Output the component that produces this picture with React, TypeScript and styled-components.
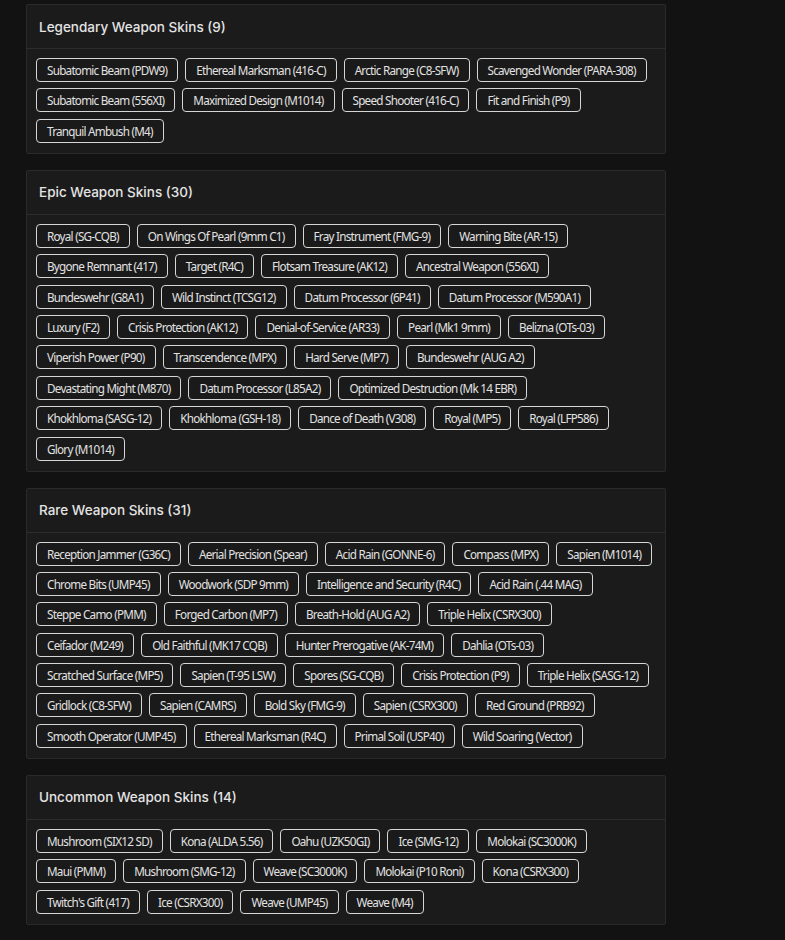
import React from 'react';
import styled, { createGlobalStyle } from 'styled-components';

const GlobalStyle = createGlobalStyle`
  body {
    margin: 0;
    background-color: #121212;
    font-family: "Noto Sans", Inter, sans-serif;
  }
`;

const Page = styled.main`
  display: flex;
  flex-direction: column;
  gap: 16px;
  padding: 4px 0 16px 26px;
`;

const Card = styled.section`
  width: 640px;
  box-sizing: border-box;
  background-color: #1b1b1b;
  border: 1px solid #2a2a2a;
  border-radius: 2px;
`;

const CardHeader = styled.header`
  height: 43px;
  display: flex;
  align-items: center;
  padding: 0 12px;
  border-bottom: 1px solid #2c2c2c;
`;

const Title = styled.h2`
  margin: 0;
  font-family: Inter, "Noto Sans", sans-serif;
  font-size: 13.5px;
  font-weight: 500;
  color: #e4e4e4;
`;

const TagList = styled.div`
  display: flex;
  flex-wrap: wrap;
  gap: 6.4px 7px;
  padding: 9px 9px 10px;
`;

const Tag = styled.span`
  display: inline-flex;
  align-items: center;
  height: 24px;
  box-sizing: border-box;
  padding: 0 10px;
  border: 1px solid #d6d6d6;
  border-radius: 4px;
  background-color: #1a1a1a;
  color: #e2e2e2;
  font-size: 11.7px;
  letter-spacing: -0.75px;
  white-space: nowrap;
`;

type Section = { title: string; skins: string[] };

const sections: Section[] = [
  {
    title: 'Legendary Weapon Skins',
    skins: [
      'Subatomic Beam (PDW9)',
      'Ethereal Marksman (416-C)',
      'Arctic Range (C8-SFW)',
      'Scavenged Wonder (PARA-308)',
      'Subatomic Beam (556XI)',
      'Maximized Design (M1014)',
      'Speed Shooter (416-C)',
      'Fit and Finish (P9)',
      'Tranquil Ambush (M4)',
    ],
  },
  {
    title: 'Epic Weapon Skins',
    skins: [
      'Royal (SG-CQB)',
      'On Wings Of Pearl (9mm C1)',
      'Fray Instrument (FMG-9)',
      'Warning Bite (AR-15)',
      'Bygone Remnant (417)',
      'Target (R4C)',
      'Flotsam Treasure (AK12)',
      'Ancestral Weapon (556XI)',
      'Bundeswehr (G8A1)',
      'Wild Instinct (TCSG12)',
      'Datum Processor (6P41)',
      'Datum Processor (M590A1)',
      'Luxury (F2)',
      'Crisis Protection (AK12)',
      'Denial-of-Service (AR33)',
      'Pearl (Mk1 9mm)',
      'Belizna (OTs-03)',
      'Viperish Power (P90)',
      'Transcendence (MPX)',
      'Hard Serve (MP7)',
      'Bundeswehr (AUG A2)',
      'Devastating Might (M870)',
      'Datum Processor (L85A2)',
      'Optimized Destruction (Mk 14 EBR)',
      'Khokhloma (SASG-12)',
      'Khokhloma (GSH-18)',
      'Dance of Death (V308)',
      'Royal (MP5)',
      'Royal (LFP586)',
      'Glory (M1014)',
    ],
  },
  {
    title: 'Rare Weapon Skins',
    skins: [
      'Reception Jammer (G36C)',
      'Aerial Precision (Spear)',
      'Acid Rain (GONNE-6)',
      'Compass (MPX)',
      'Sapien (M1014)',
      'Chrome Bits (UMP45)',
      'Woodwork (SDP 9mm)',
      'Intelligence and Security (R4C)',
      'Acid Rain (.44 MAG)',
      'Steppe Camo (PMM)',
      'Forged Carbon (MP7)',
      'Breath-Hold (AUG A2)',
      'Triple Helix (CSRX300)',
      'Ceifador (M249)',
      'Old Faithful (MK17 CQB)',
      'Hunter Prerogative (AK-74M)',
      'Dahlia (OTs-03)',
      'Scratched Surface (MP5)',
      'Sapien (T-95 LSW)',
      'Spores (SG-CQB)',
      'Crisis Protection (P9)',
      'Triple Helix (SASG-12)',
      'Gridlock (C8-SFW)',
      'Sapien (CAMRS)',
      'Bold Sky (FMG-9)',
      'Sapien (CSRX300)',
      'Red Ground (PRB92)',
      'Smooth Operator (UMP45)',
      'Ethereal Marksman (R4C)',
      'Primal Soil (USP40)',
      'Wild Soaring (Vector)',
    ],
  },
  {
    title: 'Uncommon Weapon Skins',
    skins: [
      'Mushroom (SIX12 SD)',
      'Kona (ALDA 5.56)',
      'Oahu (UZK50GI)',
      'Ice (SMG-12)',
      'Molokai (SC3000K)',
      'Maui (PMM)',
      'Mushroom (SMG-12)',
      'Weave (SC3000K)',
      'Molokai (P10 Roni)',
      'Kona (CSRX300)',
      "Twitch's Gift (417)",
      'Ice (CSRX300)',
      'Weave (UMP45)',
      'Weave (M4)',
    ],
  },
];

const App = () => (
  <>
    <GlobalStyle />
    <Page>
      {sections.map((section) => (
        <Card key={section.title}>
          <CardHeader>
            <Title>
              {section.title} ({section.skins.length})
            </Title>
          </CardHeader>
          <TagList>
            {section.skins.map((skin) => (
              <Tag key={skin}>{skin}</Tag>
            ))}
          </TagList>
        </Card>
      ))}
    </Page>
  </>
);

export default App;
